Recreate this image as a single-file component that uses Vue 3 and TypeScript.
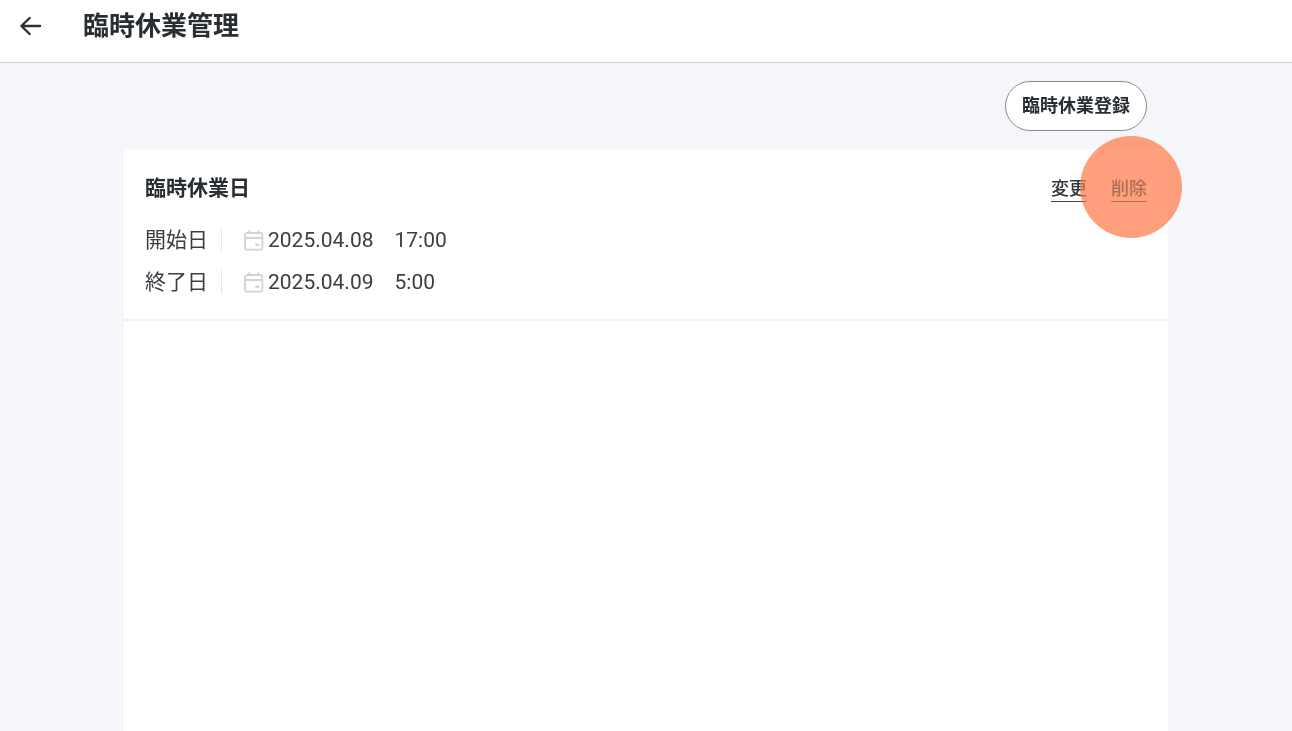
<script setup lang="ts">
interface ClosurePoint {
  label: string
  date: string
  time: string
}

const points: ClosurePoint[] = [
  { label: '開始日', date: '2025.04.08', time: '17:00' },
  { label: '終了日', date: '2025.04.09', time: '5:00' },
]
</script>

<template>
  <div class="page">
    <header class="topbar">
      <button class="back" type="button" aria-label="戻る">
        <svg width="22" height="20" viewBox="0 0 22 20" fill="none" stroke="currentColor" stroke-width="2.4" stroke-linecap="round" stroke-linejoin="round">
          <path d="M20 10H1.6M9.6 2L1.4 10L9.6 18" />
        </svg>
      </button>
      <h1>臨時休業管理</h1>
    </header>

    <main class="content">
      <div class="toolbar">
        <button class="register" type="button">臨時休業登録</button>
      </div>

      <section class="panel">
        <article class="closure">
          <div class="closure-head">
            <h2>臨時休業日</h2>
            <nav class="actions">
              <a href="#edit">変更</a>
              <span class="target">
                <a href="#delete">削除</a>
                <span class="tap tap-veil"></span>
                <span class="tap tap-tint"></span>
              </span>
            </nav>
          </div>
          <dl>
            <div v-for="point in points" :key="point.label" class="row">
              <dt>{{ point.label }}</dt>
              <dd>
                <svg class="calendar" width="20" height="21" viewBox="0 0 20 21" fill="none" stroke="currentColor" stroke-width="1.8" aria-hidden="true">
                  <rect x="1" y="3" width="17.4" height="16.6" rx="2" />
                  <path d="M1 8H18.4M5 0.2V3M14.4 0.2V3" />
                  <path d="M11.4 14.8H15.2" stroke-width="2.4" />
                </svg>
                <span class="date">{{ point.date }}</span>
                <span>{{ point.time }}</span>
              </dd>
            </div>
          </dl>
        </article>
      </section>
    </main>
  </div>
</template>

<style>
body {
  margin: 0;
  background: #f4f6f9;
}
</style>

<style scoped>
.page {
  display: flex;
  flex-direction: column;
  min-height: 100vh;
  overflow-x: hidden;
  background: #f4f6f9;
  color: #292d34;
  font-family: Roboto, "Noto Sans CJK JP", sans-serif;
}

.topbar {
  display: flex;
  align-items: center;
  gap: 41px;
  padding: 6px 20px 16px;
  border-bottom: 1px solid #cdd2d8;
  background: #fff;
}

.back {
  display: flex;
  padding: 0;
  border: 0;
  background: none;
  color: #2d3034;
}

h1,
h2 {
  margin: 0;
  font-weight: 700;
}

h1 {
  font-size: 26px;
  line-height: 40px;
}

.content {
  flex: 1;
  display: flex;
  flex-direction: column;
  gap: 18px;
  padding: 18px 124px 0;
}

.toolbar {
  display: flex;
  justify-content: flex-end;
  padding: 0 21px;
}

.register {
  padding: 0 16px;
  border: 1px solid #858b95;
  border-radius: 25px;
  background: #fff;
  color: #292d34;
  font: inherit;
  font-size: 18px;
  font-weight: 700;
  line-height: 48px;
}

.panel {
  flex: 1;
  background: #fff;
}

.closure {
  padding: 22px 21px 16px;
  border-bottom: 2px solid #eef0f2;
}

.closure-head {
  display: flex;
  align-items: center;
  justify-content: space-between;
}

h2 {
  font-size: 21px;
  line-height: 34px;
}

.actions {
  display: flex;
  gap: 24px;
}

.actions a {
  display: block;
  padding-top: 2px;
  border-bottom: 1px solid #3f434a;
  color: #33363d;
  font-size: 18px;
  font-weight: 500;
  line-height: 24px;
  text-decoration: none;
}

.target {
  position: relative;
}

.tap {
  position: absolute;
  top: -39px;
  left: -31px;
  width: 102px;
  height: 102px;
  border-radius: 50%;
  pointer-events: none;
}

.tap-veil {
  background: rgba(255, 255, 255, 0.6);
}

.tap-tint {
  background: #ff9f7c;
  mix-blend-mode: multiply;
}

dl {
  margin: 14px 0 0;
}

.row {
  display: flex;
  align-items: center;
  height: 42px;
  font-size: 21px;
  line-height: 24px;
  color: #3a3d43;
}

dt {
  padding-right: 13px;
  border-right: 1px solid #e3e5e8;
}

dd {
  display: flex;
  align-items: center;
  margin: 0 0 0 22px;
}

.calendar {
  margin-right: 4px;
  color: #d0d3d8;
}

.date {
  margin-right: 21px;
}
</style>
